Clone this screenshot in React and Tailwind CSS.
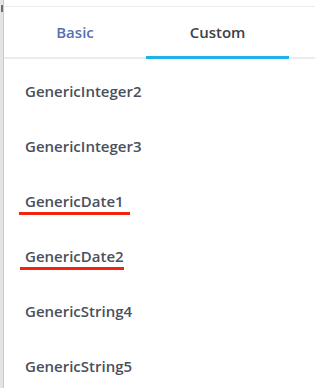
import React, { useState } from "react";

const FIELDS = [
  { name: "GenericInteger2" },
  { name: "GenericInteger3" },
  { name: "GenericDate1", mark: "left-[-6px] right-[-6px]" },
  { name: "GenericDate2", mark: "left-[-5px] right-0" },
  { name: "GenericString4" },
  { name: "GenericString5" },
];

const App = () => {
  const [tab, setTab] = useState("custom");

  return (
    <div className="flex h-[388px] w-[315px] overflow-hidden bg-white" style={{ fontFamily: '"Open Sans", "Liberation Sans", sans-serif' }}>
      {/* edge of the page behind the panel */}
      <div className="flex w-[4px] shrink-0 flex-col items-start bg-[#e4e4e2] border-r border-[#c9c9c7] pt-[5px] pl-[1px]">
        <span className="h-[7px] w-[2px] bg-[#6b6f78]" />
      </div>

      <div className="flex-1 pt-[6px]">
        {/* Tabs */}
        <div className="flex border-t border-b-2 border-[#ebecef]">
          <button
            onClick={() => setTab("basic")}
            className="relative h-[50px] w-[142px] text-[15px] font-semibold text-[#5870b4]"
          >
            Basic
            {tab === "basic" && <span className="absolute left-0 right-0 bottom-[-2px] h-[3px] bg-[#1cb3e8]" />}
          </button>
          <button
            onClick={() => setTab("custom")}
            className="relative h-[50px] w-[143px] text-[15px] font-semibold text-[#3b404b]"
          >
            Custom
            {tab === "custom" && <span className="absolute left-0 right-0 bottom-[-2px] h-[3px] bg-[#1cb3e8]" />}
          </button>
        </div>

        {/* Field list */}
        <div className="pt-[5px] pl-[21px]">
          {FIELDS.map((f) => (
            <div key={f.name} className="flex h-[55px] items-center">
              <span className="relative text-[15px] font-semibold text-[#4a4f5c]">
                {f.name}
                {f.mark && <span className={`absolute top-[22px] h-[3px] bg-[#f2230f] ${f.mark}`} />}
              </span>
            </div>
          ))}
        </div>
      </div>
    </div>
  );
};

export default App;
